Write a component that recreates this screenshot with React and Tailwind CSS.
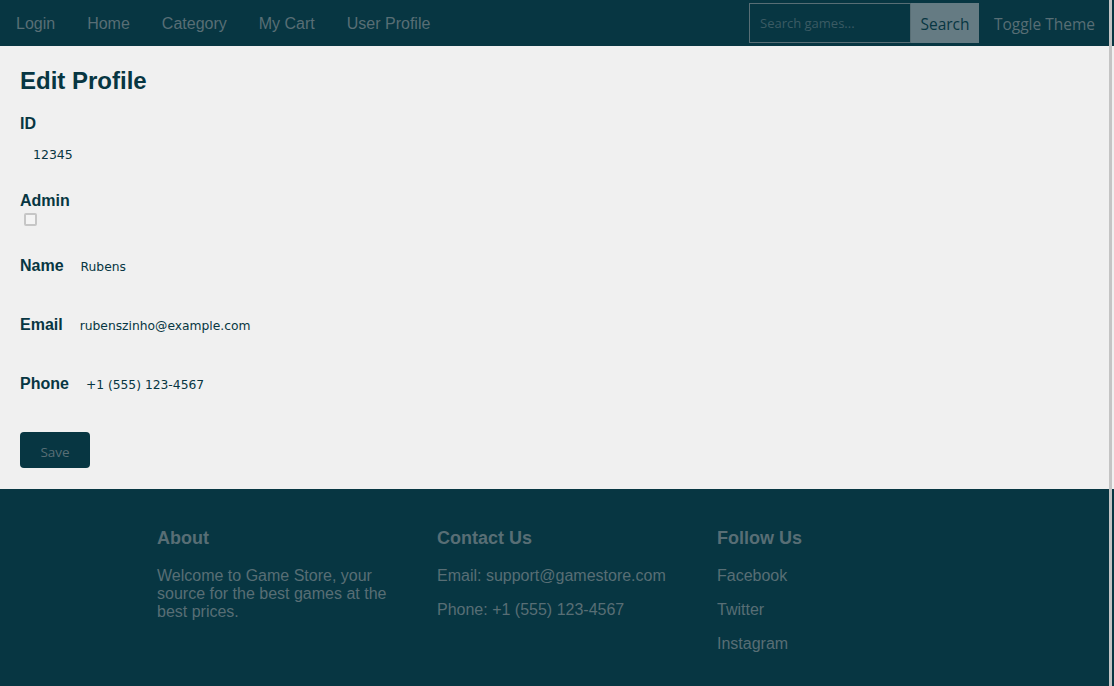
import React, { useState } from 'react';

const navLinks = ['Login', 'Home', 'Category', 'My Cart', 'User Profile'];

const Header = () => (
  <header className="h-[46px] bg-[#073642] flex items-center justify-between pr-1">
    <nav className="flex items-center pt-[2px]">
      {navLinks.map((link) => (
        <a
          key={link}
          href="#"
          className="px-4 text-base leading-[18px] text-[#586e75] font-['Liberation_Sans',Arial,sans-serif]"
        >
          {link}
        </a>
      ))}
    </nav>
    <div className="flex items-center font-['Open_Sans',sans-serif]">
      <input
        type="text"
        placeholder="Search games..."
        className="w-[162px] h-10 border border-[#586e75] bg-transparent pl-[10px] text-[13px] text-[#93a1a1] placeholder:text-[#3b5b64] outline-none"
      />
      <button className="w-[68px] h-10 pt-1 bg-[#657b83] text-[#073642] text-[15.5px]">Search</button>
      <button className="w-[131px] h-10 pt-1 text-[#586e75] text-[15.5px]">Toggle Theme</button>
    </div>
  </header>
);

const Field = ({ label, value, className }) => (
  <div className={`flex items-baseline gap-[17px] ${className}`}>
    <span className="text-base leading-[18px] font-bold text-[#073642]">{label}</span>
    <span className="text-[12.3px] leading-[18px] text-[#073642] font-['DejaVu_Sans',sans-serif]">{value}</span>
  </div>
);

const EditProfile = () => {
  const [admin, setAdmin] = useState(false);

  return (
    <main className="bg-[#f0f0f0] px-5 pt-5 pb-[21px] font-['Liberation_Sans',Arial,sans-serif]">
      <h2 className="text-2xl leading-[30px] font-bold text-[#073642]">Edit Profile</h2>

      <div className="mt-[19px] text-base leading-[18px] font-bold text-[#073642]">ID</div>
      <div className="mt-[12px] pl-[13px] text-[12.5px] leading-5 text-[#073642] font-['DejaVu_Sans',sans-serif]">12345</div>

      <div className="mt-[27px] text-base leading-[18px] font-bold text-[#073642]">Admin</div>
      <div className="mt-[3px] flex">
        <input
          type="checkbox"
          checked={admin}
          onChange={(e) => setAdmin(e.target.checked)}
          className="ml-1 w-[13px] h-[13px] appearance-none border-2 border-[#c6c6c6] rounded-[2px] bg-[#f4f4f4] checked:bg-[#073642]"
        />
      </div>

      <Field label="Name" value="Rubens" className="mt-[31px]" />
      <Field label="Email" value="rubenszinho@example.com" className="mt-[40px]" />
      <Field label="Phone" value="+1 (555) 123-4567" className="mt-[40px]" />

      <button className="mt-[38px] w-[70px] h-9 pt-1 rounded bg-[#073642] text-[#586e75] text-[13.5px] font-['Open_Sans',sans-serif]">
        Save
      </button>
    </main>
  );
};

const Footer = () => (
  <footer className="bg-[#073642] pt-[39px] pb-[36px] text-[#586e75] font-['Liberation_Sans',Arial,sans-serif]">
    <div className="flex justify-center">
      {/* About */}
      <div className="w-[280px] px-5">
        <h3 className="text-lg leading-[21px] font-bold">About</h3>
        <p className="mt-[18px] text-base leading-[18px]">
          Welcome to Game Store, your source for the best games at the best prices.
        </p>
      </div>
      {/* Contact */}
      <div className="w-[280px] px-5">
        <h3 className="text-lg leading-[21px] font-bold">Contact Us</h3>
        <p className="mt-[18px] text-base leading-[18px]">Email: support@gamestore.com</p>
        <p className="mt-4 text-base leading-[18px]">Phone: +1 (555) 123-4567</p>
      </div>
      {/* Social */}
      <div className="w-[280px] px-5">
        <h3 className="text-lg leading-[21px] font-bold">Follow Us</h3>
        <ul className="mt-[18px] space-y-4 text-base leading-[18px]">
          <li><a href="#">Facebook</a></li>
          <li><a href="#">Twitter</a></li>
          <li><a href="#">Instagram</a></li>
        </ul>
      </div>
    </div>
  </footer>
);

export default function App() {
  return (
    <div className="min-h-screen bg-[#073642]">
      <Header />
      <EditProfile />
      <Footer />
      {/* thin scroll track line over the right edge */}
      <div className="fixed top-0 bottom-0 left-[1109px] w-[3px] bg-[#c4c4c4]" />
    </div>
  );
}
